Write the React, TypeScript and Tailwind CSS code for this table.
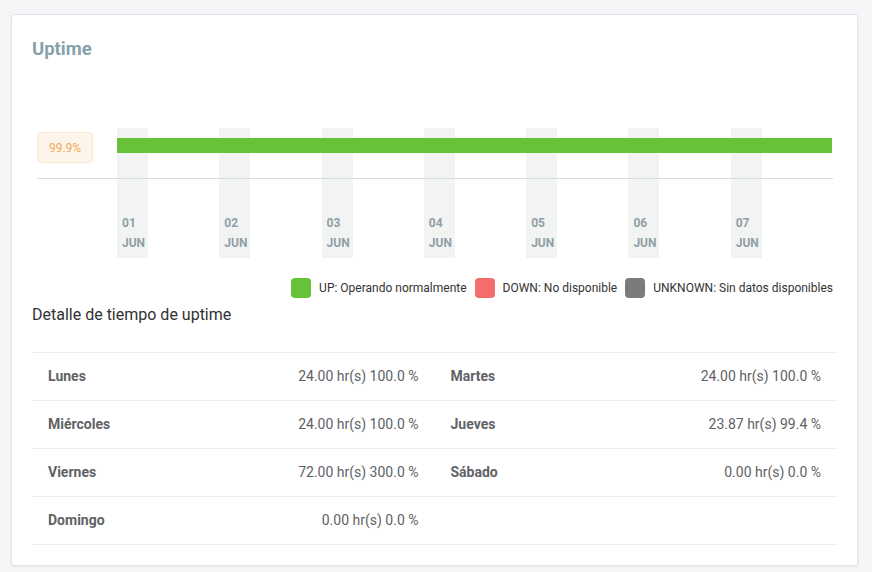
import React from "react"

const days = ["01", "02", "03", "04", "05", "06", "07"]

const legend = [
  { label: "UP: Operando normalmente", color: "bg-[#67c23a]" },
  { label: "DOWN: No disponible", color: "bg-[#f56c6c]" },
  { label: "UNKNOWN: Sin datos disponibles", color: "bg-[#7b7b7b]" },
]

const detail = [
  { day: "Lunes", value: "24.00 hr(s) 100.0 %" },
  { day: "Martes", value: "24.00 hr(s) 100.0 %" },
  { day: "Miércoles", value: "24.00 hr(s) 100.0 %" },
  { day: "Jueves", value: "23.87 hr(s) 99.4 %" },
  { day: "Viernes", value: "72.00 hr(s) 300.0 %" },
  { day: "Sábado", value: "0.00 hr(s) 0.0 %" },
  { day: "Domingo", value: "0.00 hr(s) 0.0 %" },
]

function UptimeChart() {
  return (
    <div className="relative ml-[5px] mr-[4px] flex h-[130px]">
      {/* y label */}
      <div className="w-[80px] pt-[4px]">
        <div className="flex h-[31px] w-[56px] items-center justify-center rounded-[4px] border border-[#fbe6cf] bg-[#fdf5eb] text-[12px] text-[#eeaa55]">
          99.9%
        </div>
      </div>

      {/* day columns */}
      <div className="flex flex-1">
        {days.map((d) => (
          <div key={d} className="flex-1">
            <div className="flex h-full w-[31px] flex-col justify-end bg-[#f2f4f3] pb-[5px] pl-[5px] text-[12px] font-bold leading-[20px] text-[#909fa6]">
              <span>{d}</span>
              <span>JUN</span>
            </div>
          </div>
        ))}
      </div>

      {/* uptime bar */}
      <div className="absolute left-[80px] right-[1px] top-[10px] h-[15px] bg-[#67c23a]" />
      {/* axis */}
      <div className="absolute left-0 right-0 top-[50px] h-px bg-[#d6dcda]" />
    </div>
  )
}

export default function App() {
  return (
    <div className="min-h-screen bg-[#f6f6f8] pl-[11px] pr-[14px] pt-[14px] font-['Roboto',sans-serif]">
      <div className="rounded-[3px] border border-[#e3e3ea] bg-white px-[20px] pb-[20px] pt-[20px] shadow-[0_1px_3px_rgba(0,0,0,0.06)]">
        <h2 className="text-[18.5px] font-bold leading-[28px] text-[#88a2ab]">Uptime</h2>

        <div className="mt-[65px]">
          <UptimeChart />
        </div>

        <div className="mt-[20px] mr-[4px] flex justify-end gap-[8px] text-[12px] leading-[20px] text-[#333]">
          {legend.map((l) => (
            <div key={l.label} className="flex items-center gap-[8px]">
              <span className={`h-[20px] w-[20px] rounded-[4px] ${l.color}`} />
              <span>{l.label}</span>
            </div>
          ))}
        </div>

        <h3 className="mt-[5px] text-[16px] leading-[24px] text-[#303133]">Detalle de tiempo de uptime</h3>

        <div className="mt-[25px] grid grid-cols-2 border-t border-[#ebeef5] text-[14px] text-[#606266]">
          {detail.map((r) => (
            <div key={r.day} className="flex h-[48px] items-center justify-between border-b border-[#ebeef5] px-[16px]">
              <span className="font-bold">{r.day}</span>
              <span>{r.value}</span>
            </div>
          ))}
          <div className="h-[48px] border-b border-[#ebeef5]" />
        </div>
      </div>
    </div>
  )
}
